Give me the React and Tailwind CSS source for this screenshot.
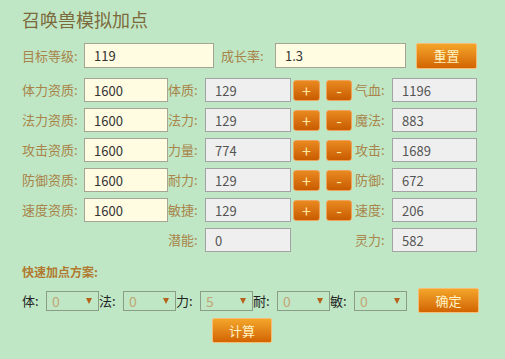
import { useState } from "react";

const font = "font-['Noto_Sans_CJK_SC','Noto_Sans',sans-serif]";
const labelClass = "shrink-0 text-[13px] leading-[24px] text-[#a8844a]";
const yellowInput =
  "h-[24px] shrink-0 border border-[#a5a596] bg-[#fffce1] pl-[9px] text-[13px] text-[#333] outline-none";
const grayInput =
  "h-[24px] shrink-0 border border-[#a3a3a3] bg-[#efefef] pl-[9px] text-[13px] text-[#555] outline-none";
const bigButton =
  "shrink-0 rounded-[2px] border border-[#f7bd72] bg-gradient-to-b from-[#f3a52a] to-[#d26400] text-[13px] text-[#fff3c2]";
const smallButton =
  "flex h-[21px] shrink-0 items-center justify-center rounded-[3px] border border-[#eea25a] bg-gradient-to-b from-[#e9891f] to-[#c85c00] text-[16px] leading-none text-[#ffe9a0]";

const rows = [
  { apt: "体力资质", attr: "体质", value: 129, res: "气血", resValue: 1196 },
  { apt: "法力资质", attr: "法力", value: 129, res: "魔法", resValue: 883 },
  { apt: "攻击资质", attr: "力量", value: 774, res: "攻击", resValue: 1689 },
  { apt: "防御资质", attr: "耐力", value: 129, res: "防御", resValue: 672 },
  { apt: "速度资质", attr: "敏捷", value: 129, res: "速度", resValue: 206 },
];

const quick = [
  { label: "体", value: "0" },
  { label: "法", value: "0" },
  { label: "力", value: "5" },
  { label: "耐", value: "0" },
  { label: "敏", value: "0" },
];

const QuickSelect = ({ value }) => (
  <div className="relative h-[20px] w-[53px] shrink-0 border border-[#8b9c87]">
    <span className="block pl-[5px] text-[14px] leading-[18px] text-[#c2a676]">{value}</span>
    <span className="absolute right-[6px] top-[6px] h-0 w-0 border-x-[3px] border-t-[6px] border-x-transparent border-t-[#b4621a]" />
  </div>
);

const App = () => {
  const [level, setLevel] = useState("119");
  const [growth, setGrowth] = useState("1.3");

  return (
    <div className={`min-h-screen bg-[#c0e7c5] pl-[22px] pt-[6px] ${font}`}>
      <p className="text-[18px] leading-[26px] text-[#7b6a3c]">召唤兽模拟加点</p>

      <div className="mt-[11px] flex items-start">
        <span className={`${labelClass} w-[62px] leading-[25px]`}>目标等级:</span>
        <input className={`${yellowInput} h-[25px] w-[130px]`} value={level} onChange={(e) => setLevel(e.target.value)} />
        <span className={`${labelClass} ml-[7px] w-[54px] leading-[25px]`}>成长率:</span>
        <input className={`${yellowInput} h-[25px] w-[131px]`} value={growth} onChange={(e) => setGrowth(e.target.value)} />
        <button type="button" className={`${bigButton} ml-[10px] h-[26px] w-[61px]`}>
          重置
        </button>
      </div>

      <div className="mt-[9px] flex flex-col gap-[6px]">
        {rows.map((row) => (
          <div key={row.apt} className="flex items-center">
            <span className={`${labelClass} w-[62px]`}>{row.apt}:</span>
            <input className={`${yellowInput} w-[84px]`} defaultValue="1600" />
            <span className={`${labelClass} w-[37px]`}>{row.attr}:</span>
            <input className={`${grayInput} w-[86px]`} value={row.value} readOnly />
            <button type="button" className={`${smallButton} ml-[2px] w-[27px]`}>+</button>
            <button type="button" className={`${smallButton} ml-[6px] w-[26px]`}>-</button>
            <span className={`${labelClass} ml-[3px] w-[37px]`}>{row.res}:</span>
            <input className={`${grayInput} w-[85px]`} value={row.resValue} readOnly />
          </div>
        ))}
        <div className="flex items-center">
          <span className="w-[146px] shrink-0" />
          <span className={`${labelClass} w-[37px]`}>潜能:</span>
          <input className={`${grayInput} w-[86px]`} value={0} readOnly />
          <span className="w-[64px] shrink-0" />
          <span className={`${labelClass} w-[37px]`}>灵力:</span>
          <input className={`${grayInput} w-[85px]`} value={582} readOnly />
        </div>
      </div>

      <p className="mt-[12px] text-[12px] font-bold leading-[16px] text-[#b07a30]">快速加点方案:</p>

      <div className="mt-[8px] flex items-center">
        {quick.map((q) => (
          <div key={q.label} className="flex items-center">
            <span className="w-[24px] shrink-0 text-[13px] text-[#222]">{q.label}:</span>
            <QuickSelect value={q.value} />
          </div>
        ))}
        <button type="button" className={`${bigButton} ml-[11px] h-[25px] w-[61px]`}>
          确定
        </button>
      </div>

      <button type="button" className={`${bigButton} ml-[190px] mt-[5px] h-[25px] w-[60px]`}>
        计算
      </button>
    </div>
  );
};

export default App;
